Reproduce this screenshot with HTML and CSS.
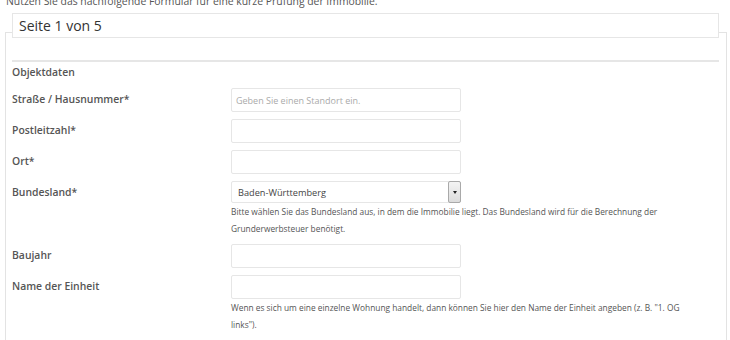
FILE: index.html
```html
<!DOCTYPE html>
<html lang="de">
<head>
<meta charset="utf-8">
<title>Objektdaten</title>
<link rel="stylesheet" href="styles.css">
</head>
<body>
<div class="page">
  <p class="intro">Nutzen Sie das nachfolgende Formular für eine kurze Prüfung der Immobilie.</p>
  <div class="panel">
    <div class="legend">Seite 1 von 5</div>
    <hr class="rule">
    <h3 class="section">Objektdaten</h3>

    <div class="row">
      <label class="label">Straße / Hausnummer*</label>
      <div class="field">
        <div class="input"><span class="placeholder">Geben Sie einen Standort ein.</span></div>
      </div>
    </div>

    <div class="row">
      <label class="label">Postleitzahl*</label>
      <div class="field"><div class="input"></div></div>
    </div>

    <div class="row">
      <label class="label">Ort*</label>
      <div class="field"><div class="input"></div></div>
    </div>

    <div class="row">
      <label class="label">Bundesland*</label>
      <div class="field">
        <div class="select">
          <span class="select-value">Baden-Württemberg</span>
          <span class="select-btn"><span class="caret"></span></span>
        </div>
        <p class="help">Bitte wählen Sie das Bundesland aus, in dem die Immobilie liegt. Das Bundesland wird für die Berechnung der Grunderwerbsteuer benötigt.</p>
      </div>
    </div>

    <div class="row">
      <label class="label">Baujahr</label>
      <div class="field"><div class="input"></div></div>
    </div>

    <div class="row">
      <label class="label">Name der Einheit</label>
      <div class="field">
        <div class="input"></div>
        <p class="help">Wenn es sich um eine einzelne Wohnung handelt, dann können Sie hier den Name der Einheit angeben (z. B. "1. OG links").</p>
      </div>
    </div>
  </div>
</div>
</body>
</html>
```

FILE: styles.css
```css
html, body {
  margin: 0;
  padding: 0;
  background: #fff;
}
body {
  font-family: "Open Sans", "DejaVu Sans", sans-serif;
  color: #555;
  overflow: hidden;
}
.page {
  margin-left: 5px;
  width: 722px;
}
.intro {
  margin: -7px 0 0 1px;
  font-size: 10.4px;
  line-height: 16px;
  color: #555;
}
.panel {
  margin-top: 23px;
  border: 1px solid #e3e3e3;
  border-bottom: none;
  padding: 0 7px 40px 6px;
}
.legend {
  margin-top: -20px;
  height: 25px;
  box-sizing: border-box;
  border: 1px solid #e6e6e6;
  background: #fff;
  padding-left: 6px;
  font-size: 14px;
  line-height: 23px;
  color: #333;
}
.rule {
  margin: 22px 0 0 0;
  border: none;
  height: 2px;
  background: #e6e6e6;
}
.section {
  margin: 2px 0 8px 0;
  font-size: 10.4px;
  line-height: 16px;
  font-weight: 600;
  color: #555;
}
.row {
  display: grid;
  grid-template-columns: 219px 1fr;
  margin-bottom: 7px;
}
.label {
  padding-top: 3px;
  font-size: 10.4px;
  line-height: 16px;
  font-weight: 600;
  color: #555;
}
.field {
  min-width: 0;
}
.input {
  width: 230px;
  height: 24px;
  box-sizing: border-box;
  border: 1px solid #e6e6e6;
  border-radius: 2px;
  background: #fff;
  padding-left: 4px;
  display: flex;
  align-items: center;
}
.placeholder {
  font-size: 9px;
  color: #aaa;
}
.select {
  width: 230px;
  height: 22px;
  box-sizing: border-box;
  border: 1px solid #e6e6e6;
  border-radius: 2px;
  display: flex;
  align-items: center;
}
.select-value {
  flex: 1;
  padding-left: 6px;
  font-size: 9.2px;
  color: #444;
}
.select-btn {
  width: 13px;
  height: 22px;
  margin: -1px -1px -1px 0;
  box-sizing: border-box;
  border: 1px solid #a9a9a9;
  border-radius: 2px;
  background: linear-gradient(#f4f4f4, #dcdcdc);
  display: flex;
  align-items: center;
  justify-content: center;
}
.caret {
  width: 0;
  height: 0;
  border-left: 2.5px solid transparent;
  border-right: 2.5px solid transparent;
  border-top: 3px solid #222;
}
.help {
  margin: 0;
  max-width: 460px;
  font-size: 8.35px;
  line-height: 17px;
  color: #555;
}
```
